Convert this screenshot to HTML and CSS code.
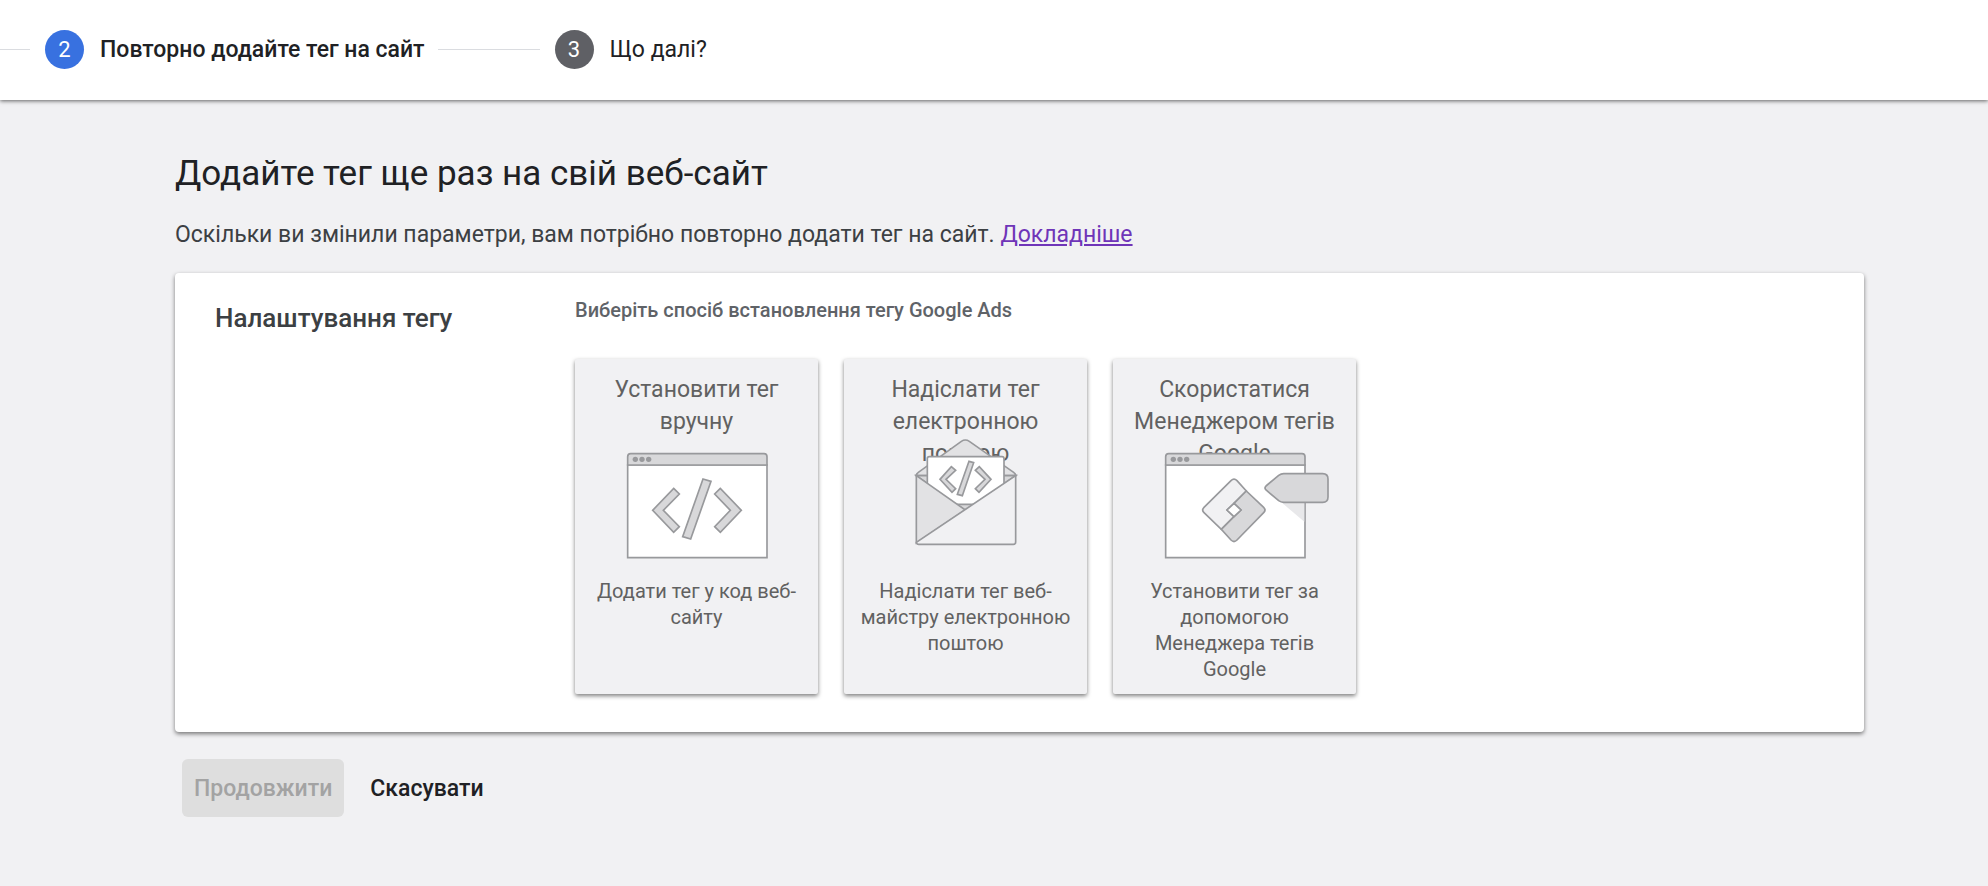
FILE: index.html
```html
<!DOCTYPE html>
<html lang="uk">
<head>
    <meta charset="UTF-8">
    <meta name="viewport" content="width=device-width, initial-scale=1">
    <title>Додайте тег ще раз на свій веб-сайт</title>
    <link rel="stylesheet" href="styles.css">
</head>
<body>
<header class="header">
    <ol class="steps">
        <li class="step active">
            <span class="num">2</span>
            <span class="name">Повторно додайте тег на сайт</span>
        </li>
        <li class="step">
            <span class="num">3</span>
            <span class="name">Що далі?</span>
        </li>
    </ol>
</header>

<main class="main">
    <h1 class="title">Додайте тег ще раз на свій веб-сайт</h1>
    <p class="intro">Оскільки ви змінили параметри, вам потрібно повторно додати тег на сайт. <a href="#">Докладніше</a></p>

    <section class="card">
        <h2 class="card-title">Налаштування тегу</h2>
        <div class="card-body">
            <h3 class="label">Виберіть спосіб встановлення тегу Google Ads</h3>
            <div class="options">
                <button type="button" class="option">
                    <span class="option-title">Установити тег вручну</span>
                    <svg class="pic" viewBox="0 0 600 360" aria-hidden="true">
                        <path class="white" d="M92 78H510V356H92z"/>
                        <path class="grey" d="M92 78V53q0-9 9-9H501q9 0 9 9V78z"/>
                        <g class="dots">
                            <circle cx="115" cy="61" r="8"/>
                            <circle cx="135" cy="61" r="8"/>
                            <circle cx="155" cy="61" r="8"/>
                        </g>
                        <path class="grey" d="M230 148L247 165L199 214L247 263L230 280L167 214z"/>
                        <path class="grey" d="M318 120L342 127L281 300L257 293z"/>
                        <path class="grey" d="M370 148L353 165L400 214L353 263L370 280L433 214z"/>
                    </svg>
                    <span class="option-text">Додати тег у код веб-сайту</span>
                </button>
                <button type="button" class="option">
                    <span class="option-title">Надіслати тег електронною поштою</span>
                    <svg class="pic" viewBox="0 0 600 360" aria-hidden="true">
                        <!-- back of the envelope -->
                        <path class="mid" d="M151 110q0-6 5-9L286 7q12-8 24 0L444 101q5 3 5 9z"/>
                        <path class="grey" d="M151 110H449L300 216z"/>
                        <!-- letter -->
                        <path class="white" d="M184 196V59q0-6 6-6H408q6 0 6 6V196z"/>
                        <path class="grey" d="M256 83L269 94L240 121L269 149L258 160L222 121z"/>
                        <path class="grey" d="M309 67L323 71L289 170L274 166z"/>
                        <path class="grey" d="M340 83L328 94L357 121L328 149L339 160L375 121z"/>
                        <!-- front flaps -->
                        <path class="mid" d="M151 110L298 213L151 312z"/>
                        <path class="light" d="M449 110V309q0 7-7 7H158q-6 0-7-6z"/>
                    </svg>
                    <span class="option-text">Надіслати тег веб-майстру електронною поштою</span>
                </button>
                <button type="button" class="option">
                    <span class="option-title">Скористатися Менеджером тегів Google</span>
                    <svg class="pic" viewBox="0 0 600 360" aria-hidden="true">
                        <path class="white" d="M92 78H510V356H92z"/>
                        <path class="shade" d="M439 190H508V248z"/>
                        <path class="grey" d="M92 78V53q0-9 9-9H501q9 0 9 9V78z"/>
                        <g class="dots">
                            <circle cx="115" cy="61" r="8"/>
                            <circle cx="135" cy="61" r="8"/>
                            <circle cx="155" cy="61" r="8"/>
                        </g>
                        <path class="light" d="M334 156L306 125q-9-9-18 0L207 205q-8 8 0 16L259 271L297 233L276 213L297 193z"/>
                        <path class="grey" d="M334 156L386 205q8 8 0 16L306 303q-9 9-18 0L259 271L297 233L318 213L297 193z"/>
                        <path class="white" d="M297 193L318 213L297 233L276 213z"/>
                        <path class="grey" d="M393 141L431 109q7-5 15-5H563q16 0 16 16V174q0 16-16 16H446q-8 0-15-5L393 153q-6-6 0-12z"/>
                    </svg>
                    <span class="option-text">Установити тег за допомогою Менеджера тегів Google</span>
                </button>
            </div>
        </div>
    </section>

    <div class="actions">
        <button type="button" class="btn" disabled>Продовжити</button>
        <button type="button" class="btn">Скасувати</button>
    </div>
</main>
</body>
</html>
```
FILE: styles.css
```css
*{margin: 0;padding: 0;box-sizing: border-box;}

body{
    background: #f1f1f3;
    color: #202124;
    font-family: Roboto, "Noto Sans", sans-serif;
}
button{
    border: 0;
    background: none;
    font-family: inherit;
    cursor: pointer;
}

/* steps */
.header{
    height: 100px;
    background: #fff;
    box-shadow: 0 1px 4px rgba(0,0,0,.6);
}
.steps{
    display: flex;
    list-style: none;
}
.step{
    display: flex;
    align-items: center;
    height: 98px;
    font-size: 23px;
}
.step::before{
    content: "";
    width: 102px;
    height: 1px;
    margin: 0 15px 0 13px;
    background: #dadce0;
}
.step:first-child::before{
    width: 30px;
    margin-left: 0;
}
.step .num{
    width: 39px;
    height: 39px;
    line-height: 39px;
    margin-right: 16px;
    border-radius: 50%;
    background: #5f6065;
    color: #fff;
    font-size: 22px;
    text-align: center;
}
.step.active .num{
    background: #3871e0;
}
.step.active .name{
    font-weight: 500;
}

/* content */
.main{
    padding: 50px 124px 49px 175px;
}
.title{
    font-size: 35px;
    line-height: 48px;
    font-weight: 400;
}
.intro{
    margin-top: 21px;
    font-size: 23px;
    line-height: 32px;
    color: #3c4043;
}
.intro a{
    color: #6f35b8;
}
.card{
    display: flex;
    margin-top: 22px;
    padding: 24px 40px 38px;
    background: #fff;
    border-radius: 4px;
    box-shadow: 0 2px 4px rgba(0,0,0,.5);
}
.card-title{
    width: 360px;
    padding-top: 3px;
    font-size: 26px;
    line-height: 36px;
    font-weight: 500;
    color: #3c4043;
}
.card-body{
    flex: 1;
}
.label{
    font-size: 20px;
    line-height: 26px;
    font-weight: 500;
    color: #5f6368;
}
.options{
    display: flex;
    gap: 26px;
    margin-top: 36px;
}
.option{
    display: flex;
    flex-direction: column;
    align-items: center;
    width: 243px;
    min-height: 335px;
    padding: 15px 16px 11px;
    background: #f1f1f3;
    color: #616161;
    border-radius: 2px;
    box-shadow: 0 2px 4px rgba(0,0,0,.5);
}
/* long titles run on under the picture */
.option-title{
    height: 65px;
    font-size: 23px;
    line-height: 32px;
}
.option-text{
    margin-top: 19px;
    font-size: 20px;
    line-height: 26px;
}
.pic{
    position: relative;
    flex: none;
    width: 200px;
    height: 120px;
    stroke: #98999c;
    stroke-width: 5;
}
.pic .white{fill: #fff;}
.pic .light{fill: #f1f1f3;}
.pic .mid{fill: #e2e2e4;}
.pic .grey{fill: #d8d8da;}
.pic .shade{fill: #e8e8ea;stroke: none;}
.pic .dots{fill: #98999c;stroke: none;}

/* buttons */
.actions{
    display: flex;
    gap: 14px;
    margin-top: 27px;
    padding-left: 7px;
}
.btn{
    height: 58px;
    padding: 0 12px;
    border-radius: 6px;
    font-size: 23px;
    font-weight: 500;
    color: #202124;
}
.btn:disabled{
    background: #dedede;
    color: #a3a3a3;
    cursor: default;
}
```
